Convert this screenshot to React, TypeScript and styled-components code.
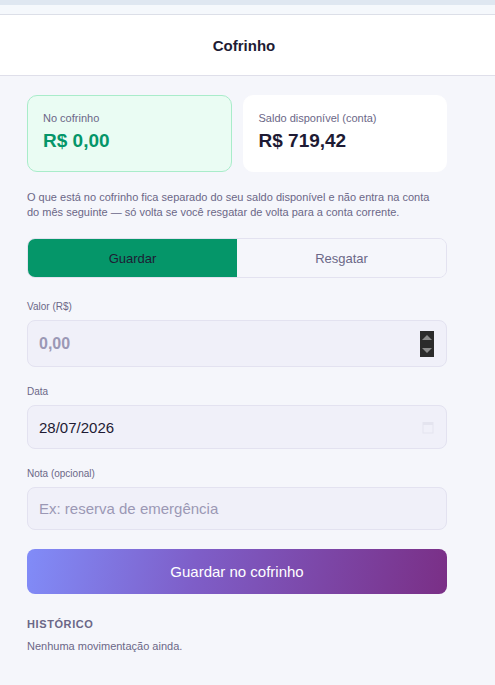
import React, { useState } from 'react';
import styled, { createGlobalStyle } from 'styled-components';

const GlobalStyle = createGlobalStyle`
    html, body {
        margin: 0;
        padding: 0;
        background: #f5f6fb;
        font-family: "Liberation Sans", Arial, sans-serif;
    }
`

const Page = styled.div`
    min-height: 685px;
    background: #f5f6fb;
`

const TopStrip = styled.div`
    height: 5px;
    background: #dfe7f1;
`

const SubStrip = styled.div`
    height: 9px;
    background: #f5f8fc;
    border-bottom: 1px solid #dcdfe8;
`

const Header = styled.header`
    height: 60px;
    background: #ffffff;
    border-bottom: 1px solid #dfdfea;
    display: flex;
    align-items: center;
    justify-content: center;
    font-size: 15px;
    font-weight: 700;
    color: #1e1b34;
    padding-right: 7px;
`

const Content = styled.main`
    width: 420px;
    margin-left: 27px;
    padding-top: 19px;
    display: flex;
    flex-direction: column;
`

const Cards = styled.div`
    display: grid;
    grid-template-columns: 1fr 1fr;
    gap: 11px;
`

const Card = styled.div<{ $accent?: boolean }>`
    height: 77px;
    box-sizing: border-box;
    border-radius: 10px;
    padding: 16px 15px;
    background: ${( p ) => p.$accent ? '#eafcf3' : '#ffffff'};
    border: 1px solid ${( p ) => p.$accent ? '#a9ecca' : '#ffffff'};
`

const CardLabel = styled.div`
    font-size: 11px;
    color: #6b6787;
`

const CardValue = styled.div<{ $accent?: boolean }>`
    margin-top: 6px;
    font-size: 19px;
    font-weight: 700;
    color: ${( p ) => p.$accent ? '#059669' : '#1e1b34'};
`

const Hint = styled.p`
    margin: 18px 0 0;
    padding-right: 8px;
    font-size: 11px;
    line-height: 15px;
    color: #6b6787;
`

const Toggle = styled.div`
    margin-top: 18px;
    height: 40px;
    box-sizing: border-box;
    border: 1px solid #e3e2f0;
    border-radius: 8px;
    overflow: hidden;
    display: grid;
    grid-template-columns: 1fr 1fr;
`

const ToggleBtn = styled.button<{ $active: boolean }>`
    border: none;
    margin: 0;
    font-family: inherit;
    font-size: 13px;
    cursor: pointer;
    background: ${( p ) => p.$active ? '#059669' : '#f5f6fb'};
    color: ${( p ) => p.$active ? '#1e1b34' : '#6b6787'};
`

const Field = styled.div<{ $top: number }>`
    margin-top: ${( p ) => p.$top}px;
    display: flex;
    flex-direction: column;
`

const Label = styled.label`
    font-size: 10px;
    color: #6b6787;
    margin-bottom: 8px;
`

const InputBox = styled.div<{ $h: number }>`
    height: ${( p ) => p.$h}px;
    box-sizing: border-box;
    background: #f0f0f9;
    border: 1px solid #e3e2f0;
    border-radius: 8px;
    display: flex;
    align-items: center;
    padding: 0 12px 0 11px;
`

const TextInput = styled.input<{ $bold?: boolean }>`
    flex: 1;
    min-width: 0;
    border: none;
    outline: none;
    background: transparent;
    padding: 0;
    font-family: inherit;
    font-size: ${( p ) => p.$bold ? '16px' : '15px'};
    font-weight: ${( p ) => p.$bold ? 700 : 400};
    color: #1e1b34;

    &::placeholder {
        color: #9b98b5;
    }
`

const Spinner = styled.div`
    width: 14px;
    height: 26px;
    background: #2b2b2b;
    display: flex;
    flex-direction: column;
    align-items: center;
    justify-content: space-between;
    padding: 4px 0;
    box-sizing: border-box;
`

const Arrow = styled.span<{ $down?: boolean }>`
    width: 0;
    height: 0;
    border-left: 5px solid transparent;
    border-right: 5px solid transparent;
    ${( p ) => p.$down ? 'border-top: 5px solid #8a8a8a;' : 'border-bottom: 5px solid #8a8a8a;'}
`

const SubmitBtn = styled.button`
    margin-top: 19px;
    height: 45px;
    border: none;
    border-radius: 8px;
    background: linear-gradient(100deg, #818cf8 0%, #7e5ec8 40%, #7a2f86 100%);
    color: #ffffff;
    font-family: inherit;
    font-size: 15px;
    cursor: pointer;
`

const HistoryTitle = styled.h4`
    margin: 24px 0 0;
    font-size: 11px;
    font-weight: 700;
    letter-spacing: 0.6px;
    color: #6b6787;
`

const Empty = styled.p`
    margin: 10px 0 0;
    font-size: 11px;
    color: #6b6787;
`

function CalendarIcon(): JSX.Element {
    return (
        <svg width="12" height="13" viewBox="0 0 12 13">
            <rect x="0.5" y="1" width="11" height="11.5" fill="#e4e4ef"/>
            <rect x="1.5" y="4" width="9" height="7.5" fill="#f0f0f9"/>
        </svg>
    )
}

export default function App(): JSX.Element {
    const [mode, setMode] = useState<'guardar' | 'resgatar'>( 'guardar' )

    return (
        <Page>
            <GlobalStyle/>
            <TopStrip/>
            <SubStrip/>
            <Header>Cofrinho</Header>
            <Content>
                <Cards>
                    <Card $accent>
                        <CardLabel>No cofrinho</CardLabel>
                        <CardValue $accent>R$ 0,00</CardValue>
                    </Card>
                    <Card>
                        <CardLabel>Saldo disponível (conta)</CardLabel>
                        <CardValue>R$ 719,42</CardValue>
                    </Card>
                </Cards>
                <Hint>
                    O que está no cofrinho fica separado do seu saldo disponível e não entra na conta
                    do mês seguinte — só volta se você resgatar de volta para a conta corrente.
                </Hint>
                <Toggle>
                    <ToggleBtn $active={mode === 'guardar'} onClick={() => setMode( 'guardar' )}>Guardar</ToggleBtn>
                    <ToggleBtn $active={mode === 'resgatar'} onClick={() => setMode( 'resgatar' )}>Resgatar</ToggleBtn>
                </Toggle>
                <Field $top={23}>
                    <Label>Valor (R$)</Label>
                    <InputBox $h={47}>
                        <TextInput $bold placeholder='0,00'/>
                        <Spinner>
                            <Arrow/>
                            <Arrow $down/>
                        </Spinner>
                    </InputBox>
                </Field>
                <Field $top={19}>
                    <Label>Data</Label>
                    <InputBox $h={44}>
                        <TextInput defaultValue='28/07/2026'/>
                        <CalendarIcon/>
                    </InputBox>
                </Field>
                <Field $top={19}>
                    <Label>Nota (opcional)</Label>
                    <InputBox $h={43}>
                        <TextInput placeholder='Ex: reserva de emergência'/>
                    </InputBox>
                </Field>
                <SubmitBtn>{mode === 'guardar' ? 'Guardar no cofrinho' : 'Resgatar do cofrinho'}</SubmitBtn>
                <HistoryTitle>HISTÓRICO</HistoryTitle>
                <Empty>Nenhuma movimentação ainda.</Empty>
            </Content>
        </Page>
    )
}
